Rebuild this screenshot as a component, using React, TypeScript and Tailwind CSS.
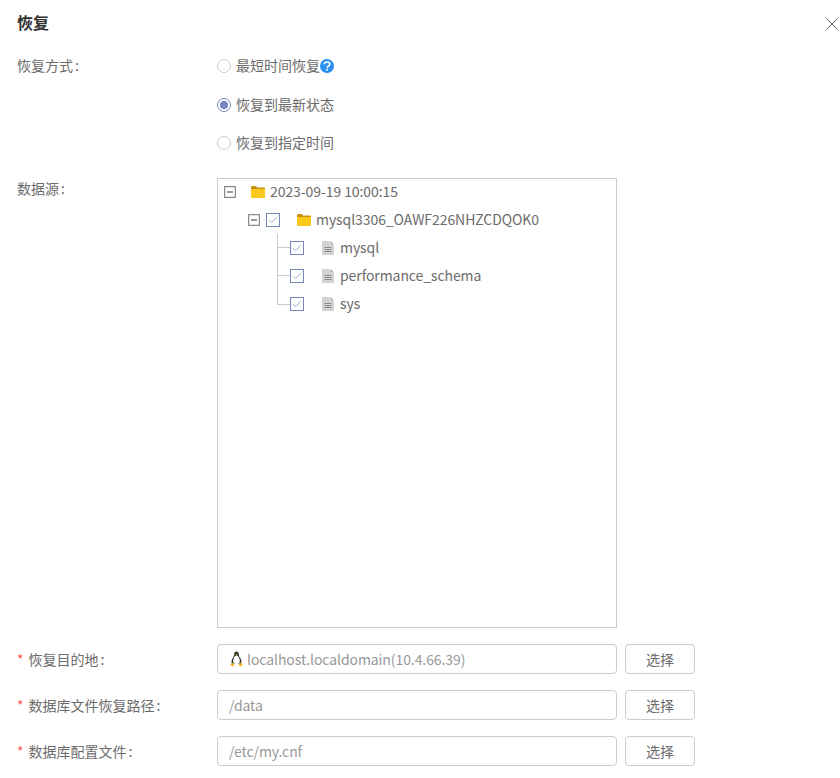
import React from "react";

const FolderIcon = () => (
  <svg width="14" height="12" viewBox="0 0 14 12" className="shrink-0">
    <path d="M0 1.500C0 .7.500 0 1.200 0h3.300c.5 0 .8.200 1 .6L6 1.600h7c.6 0 1 .4 1 1V3H0z" fill="#c9920f" />
    <path d="M0 3h14v8c0 .6-.4 1-1 1H1c-.6 0-1-.4-1-1z" fill="#f8c91c" />
  </svg>
);

const FileIcon = () => (
  <svg width="12" height="14" viewBox="0 0 12 14" className="shrink-0">
    <path d="M0 0h8v4h4v10H0z" fill="#d2d2d2" />
    <path d="M8.500 0L12 3.500H8.500z" fill="#a8a8a8" />
    <path d="M2.500 6.500h7M2.500 8.500h7M2.500 10.500h7" stroke="#8a8a8a" strokeWidth="1" />
  </svg>
);

const MinusBox = () => (
  <span className="w-[12px] h-[12px] border border-[#8a8a8a] shadow-[inset_0_0_0_1px_#e2e2e2] flex items-center justify-center shrink-0">
    <span className="w-[6px] h-[2px] bg-[#999]" />
  </span>
);

const CheckBox = () => (
  <span className="w-[14px] h-[14px] border border-[#7784bd] flex items-center justify-center shrink-0">
    <svg width="10" height="8" viewBox="0 0 10 8">
      <path d="M1 4.200l2.600 2.400L9 1" fill="none" stroke="#a3add3" strokeWidth="1" />
    </svg>
  </span>
);

const Radio = ({ checked, children }: { checked?: boolean; children: React.ReactNode }) => (
  <div className="h-[38.5px] flex items-center">
    <span
      className={`w-[14px] h-[14px] rounded-full border flex items-center justify-center shrink-0 ${
        checked ? "border-[#7784bd]" : "border-[#ccc]"
      }`}
    >
      {checked && <span className="w-[8px] h-[8px] rounded-full bg-[#7784bd]" />}
    </span>
    <span className="ml-[5px] flex items-center">{children}</span>
  </div>
);

const Connector = ({ last }: { last?: boolean }) =>
  last ? (
    <span className="w-[13px] h-[15px] self-start border-l border-b border-[#ccc] shrink-0" />
  ) : (
    <span className="w-[13px] h-full border-l border-[#ccc] shrink-0">
      <span className="block h-[14px] border-b border-[#ccc]" />
    </span>
  );

const Penguin = () => (
  <svg width="15" height="16" viewBox="0 0 15 16" className="shrink-0">
    <path d="M7.500 .5C5.600 .5 5 2 5.100 3.700 5.200 5.200 4 6 3.200 7.800 2.500 9.400 2.300 11 2.900 12.500h9.200c.6-1.500.4-3.100-.3-4.700C11 6 9.800 5.200 9.900 3.700 10 2 9.400 .5 7.500 .5z" fill="#3a3a3a" />
    <path d="M7.500 4.500C5.800 4.500 4.200 7.400 4.200 10c0 1.700 1.200 3 3.300 3s3.300-1.300 3.300-3C10.800 7.400 9.200 4.500 7.500 4.500z" fill="#fff" />
    <path d="M6.300 3.400h2.400L7.500 4.800z" fill="#f2b11d" />
    <path d="M1 13.300l2.500-1.500L5.500 14 3.500 15.500zM14 13.300l-2.500-1.500L9.500 14l2 1.500z" fill="#f2b11d" />
  </svg>
);

const TreeLeaf = ({ name, last }: { name: string; last?: boolean }) => (
  <div className="h-[28px] flex items-center pl-[59px]">
    <Connector last={last} />
    <CheckBox />
    <span className="ml-[18px]">
      <FileIcon />
    </span>
    <span className="ml-[6px] pb-[2px] tracking-[-0.08px]">{name}</span>
  </div>
);

const PathRow = ({ label, value, icon }: { label: string; value: string; icon?: boolean }) => (
  <div className="flex items-center h-[30px]">
    <label className="w-[200px] shrink-0">
      <span className="text-[#f55] mr-[5px]">*</span>
      {label}
      <span className="ml-[2px]">:</span>
    </label>
    <div className="w-[400px] h-[30px] border border-[#ccc] rounded-[4px] flex items-center pl-[11px] text-[#999] tracking-[-0.08px]">
      {icon && (
        <span className="mr-[3px]">
          <Penguin />
        </span>
      )}
      {value}
    </div>
    <button className="ml-[8px] w-[70px] h-[30px] border border-[#ccc] rounded-[4px]">选择</button>
  </div>
);

export default function App() {
  return (
    <div className="w-[840px] h-[778px] bg-white text-[14px] leading-[22px] text-[#6c6c6c] font-['Noto_Sans_CJK_SC','Noto_Sans',sans-serif] overflow-hidden">
      {/* Header */}
      <div className="h-[47px] flex items-center justify-between pl-[17px] pr-[2px]">
        <h2 className="text-[16px] font-bold text-[#333] pb-[3px]">恢复</h2>
        <svg width="12" height="12" viewBox="0 0 12 12">
          <path d="M.5.5l11 11M11.500.5l-11 11" stroke="#555" strokeWidth="1" />
        </svg>
      </div>

      <div className="pl-[17px]">
        {/* Restore mode */}
        <div className="flex">
          <label className="w-[200px] shrink-0 pt-[7px]">
            恢复方式<span className="ml-[2px]">:</span>
          </label>
          <div>
            <Radio>
              <span className="pb-[2px]">最短时间恢复</span>
              <span className="w-[14px] h-[14px] rounded-full bg-[#2a8ff0] flex items-center justify-center">
                <svg width="8" height="10" viewBox="0 0 8 10">
                  <path d="M1.200 3.200C1.300 1.800 2.400 1 4 1c1.600 0 2.800.8 2.800 2.200 0 1.800-2.500 1.800-2.600 3.600" fill="none" stroke="#fff" strokeWidth="1.600" />
                  <rect x="3.200" y="7.800" width="1.800" height="1.800" fill="#fff" />
                </svg>
              </span>
            </Radio>
            <Radio checked>
              <span className="pb-[2px]">恢复到最新状态</span>
            </Radio>
            <Radio>
              <span className="pb-[2px]">恢复到指定时间</span>
            </Radio>
          </div>
        </div>

        {/* Data source */}
        <div className="flex mt-[15.5px]">
          <label className="w-[200px] shrink-0 -mt-px">
            数据源<span className="ml-[2px]">:</span>
          </label>
          <div className="w-[400px] h-[450px] border border-[#ccc]">
            <div className="h-[28px] -mt-px flex items-center pl-[6px]">
              <MinusBox />
              <span className="ml-[15px]">
                <FolderIcon />
              </span>
              <span className="ml-[5px] pb-[2px] tracking-[-0.08px]">2023-09-19 10:00:15</span>
            </div>
            <div className="h-[28px] flex items-center pl-[30px]">
              <MinusBox />
              <span className="ml-[6px]">
                <CheckBox />
              </span>
              <span className="ml-[17px]">
                <FolderIcon />
              </span>
              <span className="ml-[5px] pb-[2px] tracking-[-0.08px]">mysql3306_OAWF226NHZCDQOK0</span>
            </div>
            <TreeLeaf name="mysql" />
            <TreeLeaf name="performance_schema" />
            <TreeLeaf name="sys" last />
          </div>
        </div>

        {/* Destination */}
        <div className="flex flex-col gap-[16px] mt-[16px]">
          <PathRow label="恢复目的地" value="localhost.localdomain(10.4.66.39)" icon />
          <PathRow label="数据库文件恢复路径" value="/data" />
          <PathRow label="数据库配置文件" value="/etc/my.cnf" />
        </div>
      </div>
    </div>
  );
}
